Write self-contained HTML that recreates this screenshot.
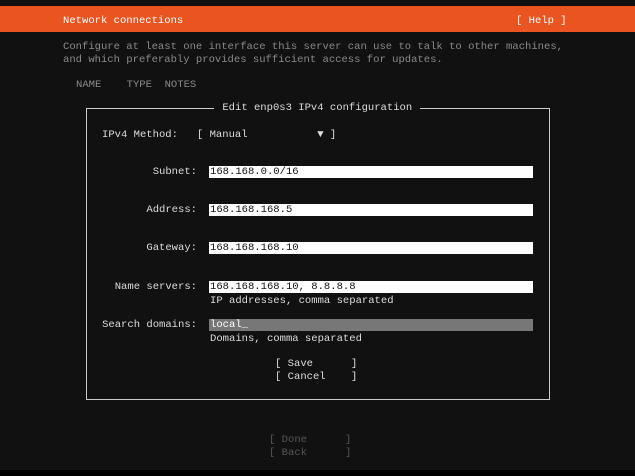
<!DOCTYPE html>
<html><head><meta charset="utf-8"><style>
html,body{margin:0;padding:0;}
body{width:635px;height:476px;background:#111;position:relative;overflow:hidden;font-family:"Liberation Mono","DejaVu Sans Mono",monospace;font-size:10.55px;color:#ddd;}
.l{position:absolute;height:13px;line-height:13px;white-space:pre;margin-top:2px;}
.hdr{position:absolute;left:0;top:6px;width:635px;height:26px;background:#e95420;}
.g{color:#8a8a8a}
.d{color:#555}
.f{position:absolute;left:209px;width:324px;height:12px;background:#fff;}
.fg{background:#777;}
.ft{color:#111;}
.box{position:absolute;left:86px;top:108px;width:462px;height:290px;border:1px solid #ccc;}
.gap{position:absolute;left:214px;top:104px;width:206px;height:8px;background:#111;}
.bot{position:absolute;left:0;top:470px;width:635px;height:6px;background:#000;}
</style></head><body>
<div class="hdr"></div>
<div class="l" style="left:63px;top:13px;color:#fff">Network connections</div>
<div class="l" style="left:516px;top:13px;color:#fff">[ Help ]</div>
<div class="l g" style="left:63px;top:39px">Configure at least one interface this server can use to talk to other machines,</div>
<div class="l g" style="left:63px;top:52px">and which preferably provides sufficient access for updates.</div>
<div class="l g" style="left:76px;top:77px">NAME    TYPE  NOTES</div>
<div class="box"></div>
<div class="gap"></div>
<div class="l" style="left:216px;top:100px"> Edit enp0s3 IPv4 configuration </div>
<div class="l" style="left:102px;top:127px">IPv4 Method:   [ Manual           ▼ ]</div>
<div class="l" style="left:96px;top:164px;width:101px;text-align:right">Subnet:</div>
<div class="f" style="top:166px"></div><div class="l ft" style="left:210px;top:164px">168.168.0.0/16</div>
<div class="l" style="left:96px;top:202px;width:101px;text-align:right">Address:</div>
<div class="f" style="top:204px"></div><div class="l ft" style="left:210px;top:202px">168.168.168.5</div>
<div class="l" style="left:96px;top:240px;width:101px;text-align:right">Gateway:</div>
<div class="f" style="top:242px"></div><div class="l ft" style="left:210px;top:240px">168.168.168.10</div>
<div class="l" style="left:96px;top:279px;width:101px;text-align:right">Name servers:</div>
<div class="f" style="top:281px"></div><div class="l ft" style="left:210px;top:279px">168.168.168.10, 8.8.8.8</div>
<div class="l" style="left:210px;top:293px">IP addresses, comma separated</div>
<div class="l" style="left:90px;top:317px;width:107px;text-align:right">Search domains:</div>
<div class="f fg" style="top:319px"></div><div class="l" style="left:210px;top:317px;color:#fff">local_</div>
<div class="l" style="left:210px;top:331px">Domains, comma separated</div>
<div class="l" style="left:275px;top:356px">[ Save      ]</div>
<div class="l" style="left:275px;top:369px">[ Cancel    ]</div>
<div class="l d" style="left:269px;top:432px">[ Done      ]</div>
<div class="l d" style="left:269px;top:445px">[ Back      ]</div>
<div class="bot"></div>
</body></html>
